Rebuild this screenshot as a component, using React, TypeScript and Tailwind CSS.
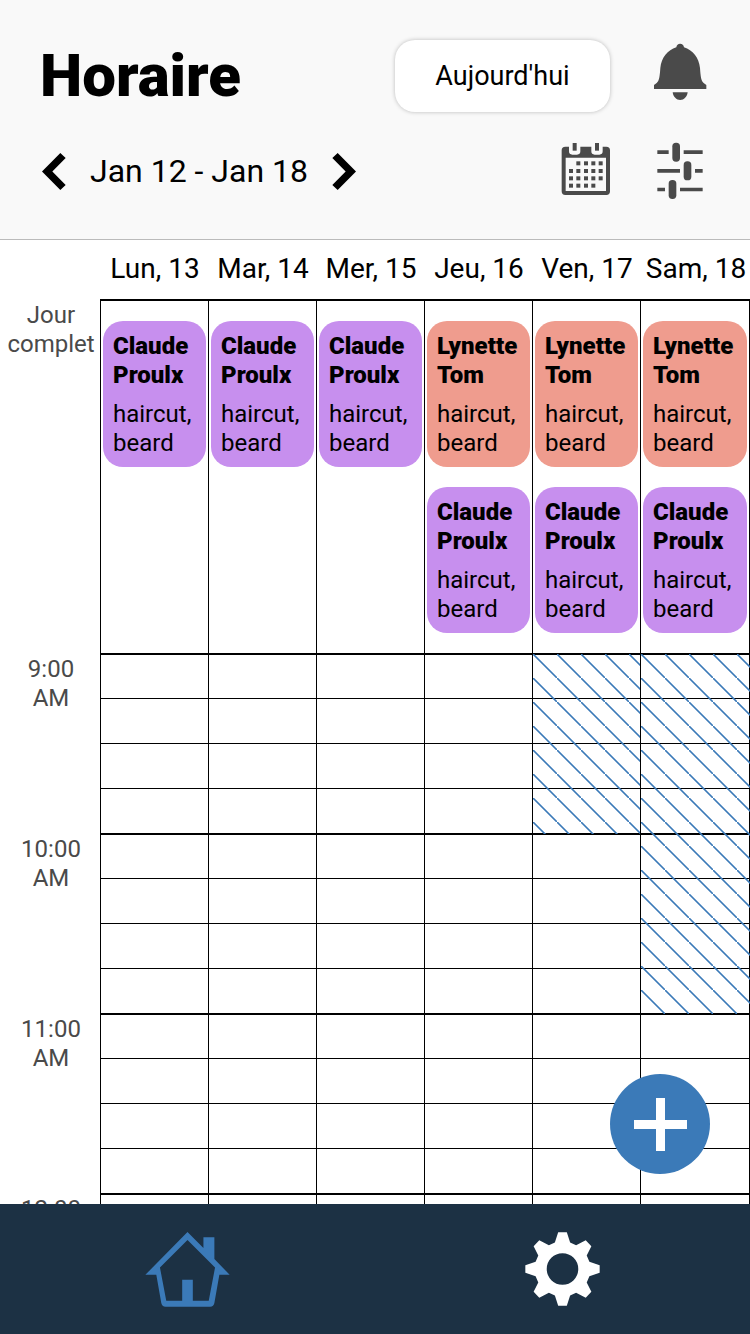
import React from "react";

type Appointment = { name: string; services: string; tone: "purple" | "coral" };
type Day = { label: string; allDay: Appointment[]; blocked?: string };

const claude: Appointment = { name: "Claude Proulx", services: "haircut, beard", tone: "purple" };
const lynette: Appointment = { name: "Lynette Tom", services: "haircut, beard", tone: "coral" };

const days: Day[] = [
  { label: "Lun, 13", allDay: [claude] },
  { label: "Mar, 14", allDay: [claude] },
  { label: "Mer, 15", allDay: [claude] },
  { label: "Jeu, 16", allDay: [lynette, claude] },
  { label: "Ven, 17", allDay: [lynette, claude], blocked: "h-[180px]" },
  { label: "Sam, 18", allDay: [lynette, claude], blocked: "h-[360px]" },
];

const hours = ["9:00 AM", "10:00 AM", "11:00 AM", "12:00 PM"];
const slots = [0, 15, 30, 45];

const tones = { purple: "bg-[#c78fee]", coral: "bg-[#ef9c8e]" };

const columns = "grid grid-cols-[100px_repeat(5,minmax(0,108fr))_minmax(0,110fr)]";

function Chevron({ flip = false }: { flip?: boolean }) {
  return (
    <svg viewBox="0 0 72 111" className={flip ? "h-[37px] w-6 -scale-x-100" : "h-[37px] w-6"} aria-hidden="true">
      <path d="M55 0 L71 15 L31 55.5 L71 96 L55 111 L0 55.5 Z" fill="#000" />
    </svg>
  );
}

function BellIcon() {
  return (
    <svg viewBox="810 60 180 216" className="h-[72px] w-[60px]" fill="#4a4a4a" aria-hidden="true">
      <path d="M900.500 71 C907 71 911 75 912 82 C938 90 957 113 960 144 C962 171 963 182 971 189 L979 195 V207 H822 V195 L830 189 C838 182 839 171 841 144 C844 113 863 90 889 82 C890 75 894 71 900.500 71 Z" />
      <path d="M878 217 H923 C921 231 912 240 900.500 240 C889 240 880 231 878 217 Z" />
    </svg>
  );
}

const dotRows = [
  { y: 424, xs: [589, 612, 634, 656] },
  { y: 447, xs: [567, 589, 612, 634, 656] },
  { y: 469, xs: [567, 589, 612, 634, 656] },
  { y: 491, xs: [567, 589, 612, 634] },
];

function CalendarIcon() {
  return (
    <svg viewBox="528 363 180 180" className="size-[60px]" fill="#4a4a4a" aria-hidden="true">
      <path
        fillRule="evenodd"
        d="M556 380 H567 V394 Q567 404 577 404 H591 Q601 404 601 394 V380 H634 V394 Q634 404 644 404 H658 Q668 404 668 394 V380 H679 Q690 380 690 391 V514 Q690 525 679 525 H556 Q545 525 545 514 V391 Q545 380 556 380 Z M557 413 V513 H678 V413 Z"
      />
      <rect x="578" y="369" width="12" height="23" />
      <rect x="645" y="369" width="12" height="23" />
      {dotRows.map((row) => row.xs.map((x) => <rect key={`${x}-${row.y}`} x={x} y={row.y} width="12" height="12" />))}
    </svg>
  );
}

function SlidersIcon() {
  return (
    <svg viewBox="810 363 180 180" className="size-[60px]" fill="#4a4a4a" aria-hidden="true">
      <path d="M832 391 H866 V402 H832 Z M911 391 H968 V402 H911 Z M832 447 H900 V458 H832 Z M945 447 H968 V458 H945 Z M832 503 H855 V514 H832 Z M900 503 H968 V514 H900 Z" />
      <rect x="877" y="368" width="23" height="57" rx="11" />
      <rect x="911" y="424" width="23" height="57" rx="11" />
      <rect x="866" y="480" width="23" height="57" rx="11" />
    </svg>
  );
}

function HomeIcon() {
  return (
    <svg viewBox="45 126 256 226" className="h-[75px] w-[85px]" fill="#3b7ab8" aria-hidden="true">
      <path
        fillRule="evenodd"
        d="M173 126 L221 174 V142 H254 V207 L300 255 H269 L254 340 Q252 351 241 351 H107 Q96 351 94 340 L79 255 H46 Z M173 150 L90 233 L109 333 H157 V270 H189 V333 H237 L256 233 Z"
      />
    </svg>
  );
}

function GearIcon() {
  return (
    <svg viewBox="75 127 226 223" className="h-[74px] w-[75px]" fill="#fff" aria-hidden="true">
      <path
        fillRule="evenodd"
        d="M175 128 H201 L211 159 L229 167 L258 152 L275 170 L261 198 L269 217 L300 227 V250 L269 260 L261 279 L275 307 L258 325 L229 310 L211 318 L201 349 H175 L165 318 L147 310 L118 325 L101 307 L115 279 L107 260 L76 250 V227 L107 217 L115 198 L101 170 L118 152 L147 167 L165 159 Z M188 191 A47.500 47.500 0 1 0 188 286 A47.500 47.500 0 1 0 188 191 Z"
      />
    </svg>
  );
}

function AppointmentCard({ item }: { item: Appointment }) {
  return (
    <article className={`${tones[item.tone]} rounded-[20px] px-2.5 pt-[11px] pb-[9px] text-2xl/[29px]`}>
      <h3 className="mb-2.5 font-black">{item.name}</h3>
      <p>{item.services}</p>
    </article>
  );
}

function DayColumn({ day }: { day: Day }) {
  return (
    <div className="border-l border-black last:border-r">
      <div className="flex h-full flex-col gap-5 border-y border-black px-0.5 pt-5 pb-5">
        {day.allDay.map((item) => (
          <AppointmentCard key={item.name} item={item} />
        ))}
      </div>
    </div>
  );
}

function DayHours({ day }: { day: Day }) {
  return (
    <div className="relative border-l border-black last:border-r">
      {hours.map((hour) => (
        <div key={hour} className="grid h-[180px] grid-rows-4 shadow-[inset_0_1px_0_#000]">
          {slots.map((slot) => (
            <div key={slot} className="border-b border-black" />
          ))}
        </div>
      ))}
      {day.blocked && (
        <div
          className={`${day.blocked} absolute top-0 -right-px left-0 bg-[linear-gradient(45deg,#3b7ab800_46%,#3b7ab8_49%,#3b7ab8_51%,#3b7ab800_54%)] bg-[size:24px_24px]`}
        />
      )}
    </div>
  );
}

export default function App() {
  return (
    <div className="flex h-screen flex-col overflow-hidden bg-white font-[Roboto,sans-serif] text-black">
      <header className="shrink-0 border-b border-[#bbbbbb] bg-[#f9f9f9] px-10 pt-10 pb-[37px]">
        <div className="flex h-[72px] items-center">
          <h1 className="flex-1 text-[60px] leading-[72px] font-black">Horaire</h1>
          <button
            type="button"
            className="mr-10 h-[72px] w-[215px] rounded-[20px] bg-white text-[27px] shadow-[0_0_4px_rgba(0,0,0,0.25)]"
          >
            Aujourd'hui
          </button>
          <button type="button" aria-label="Notifications">
            <BellIcon />
          </button>
        </div>
        <div className="mt-7 flex h-[62px] items-center">
          <div className="flex flex-1 items-center gap-6 pl-0.5">
            <button type="button" aria-label="Semaine précédente">
              <Chevron />
            </button>
            <p className="text-[32px] leading-[38px]">Jan 12 - Jan 18</p>
            <button type="button" aria-label="Semaine suivante">
              <Chevron flip />
            </button>
          </div>
          <div className="flex gap-[34px]">
            <button type="button" aria-label="Calendrier">
              <CalendarIcon />
            </button>
            <button type="button" aria-label="Filtres">
              <SlidersIcon />
            </button>
          </div>
        </div>
      </header>

      <main className="min-h-0 flex-1 overflow-y-auto [scrollbar-width:none]">
        <div className={columns}>
          <div />
          {days.map((day) => (
            <h2
              key={day.label}
              className="h-[60px] border-b border-black pl-0.5 text-center text-[28px] leading-[58px] whitespace-nowrap"
            >
              {day.label}
            </h2>
          ))}
        </div>
        <div className={columns}>
          <p className="pt-px pl-0.5 text-center text-2xl/[29px] text-[#4a4a4a]">Jour complet</p>
          {days.map((day) => (
            <DayColumn key={day.label} day={day} />
          ))}
        </div>
        <div className={columns}>
          <div className="pt-px pl-0.5">
            {hours.map((hour) => (
              <p key={hour} className="h-[180px] px-4 text-center text-2xl/[29px] text-[#4a4a4a]">
                {hour}
              </p>
            ))}
          </div>
          {days.map((day) => (
            <DayHours key={day.label} day={day} />
          ))}
        </div>
      </main>

      <div className="relative">
        <button
          type="button"
          aria-label="Ajouter"
          className="absolute right-10 bottom-[160px] flex size-[100px] items-center justify-center rounded-full bg-[#3b7ab8]"
        >
          <svg viewBox="0 0 53 53" className="size-[53px]" fill="#fff" aria-hidden="true">
            <path d="M22 0 H31 V22 H53 V31 H31 V53 H22 V31 H0 V22 H22 Z" />
          </svg>
        </button>
        <nav className="grid h-[130px] grid-cols-2 bg-[#1c3144]">
          <a href="#accueil" aria-label="Accueil" className="flex items-center justify-center">
            <HomeIcon />
          </a>
          <a href="#parametres" aria-label="Paramètres" className="flex items-center justify-center">
            <GearIcon />
          </a>
        </nav>
      </div>
    </div>
  );
}
